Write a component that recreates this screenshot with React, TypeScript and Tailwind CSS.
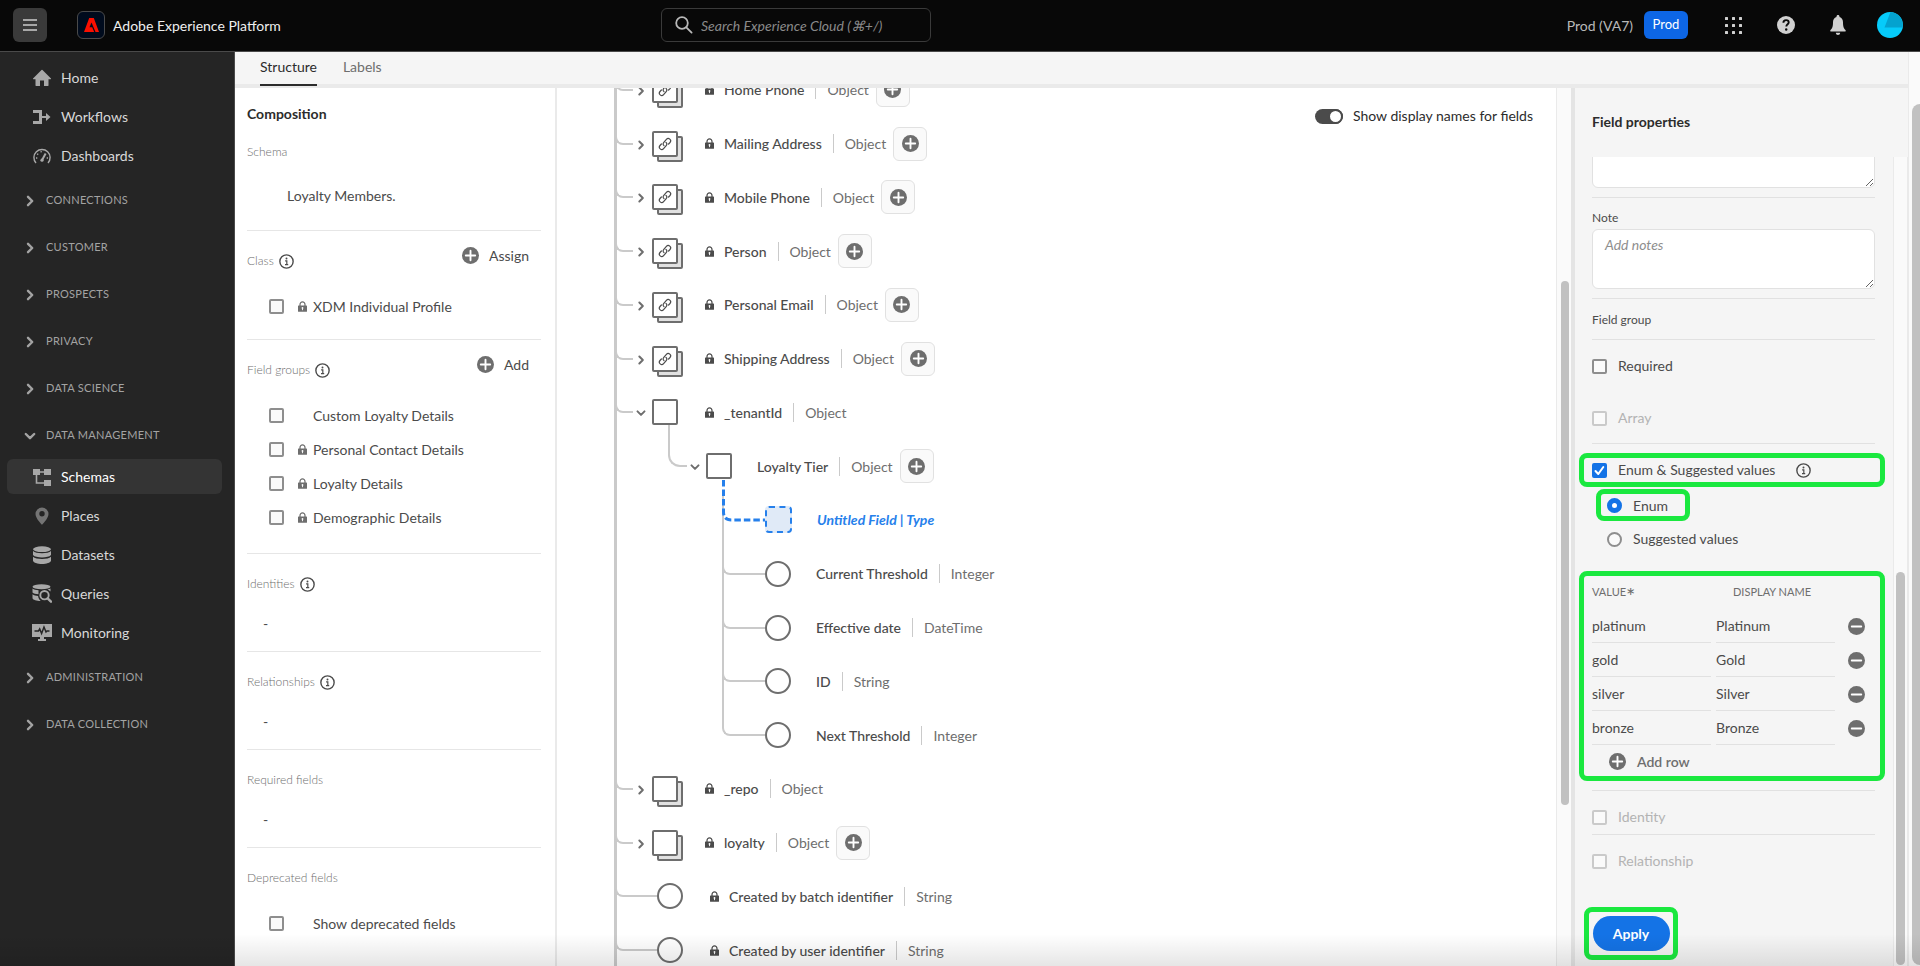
import { useState } from "react";
import type { ReactNode } from "react";
import clsx from "clsx";

type NodeKind = "stack" | "link" | "box" | "circle" | "draft";

interface TreeNode {
  label: string;
  type?: string;
  kind: NodeKind;
  depth: 0 | 1 | 2;
  locked?: boolean;
  open?: boolean;
  addable?: boolean;
  last?: boolean;
}

const treeNodes: TreeNode[] = [
  { label: "Home Phone", type: "Object", kind: "link", depth: 0, locked: true, addable: true },
  { label: "Mailing Address", type: "Object", kind: "link", depth: 0, locked: true, addable: true },
  { label: "Mobile Phone", type: "Object", kind: "link", depth: 0, locked: true, addable: true },
  { label: "Person", type: "Object", kind: "link", depth: 0, locked: true, addable: true },
  { label: "Personal Email", type: "Object", kind: "link", depth: 0, locked: true, addable: true },
  { label: "Shipping Address", type: "Object", kind: "link", depth: 0, locked: true, addable: true },
  { label: "_tenantId", type: "Object", kind: "box", depth: 0, locked: true, open: true },
  { label: "Loyalty Tier", type: "Object", kind: "box", depth: 1, open: true, addable: true },
  { label: "Untitled Field | Type", kind: "draft", depth: 2 },
  { label: "Current Threshold", type: "Integer", kind: "circle", depth: 2 },
  { label: "Effective date", type: "DateTime", kind: "circle", depth: 2 },
  { label: "ID", type: "String", kind: "circle", depth: 2 },
  { label: "Next Threshold", type: "Integer", kind: "circle", depth: 2, last: true },
  { label: "_repo", type: "Object", kind: "stack", depth: 0, locked: true },
  { label: "loyalty", type: "Object", kind: "stack", depth: 0, locked: true, addable: true },
  { label: "Created by batch identifier", type: "String", kind: "circle", depth: 0, locked: true },
  { label: "Created by user identifier", type: "String", kind: "circle", depth: 0, locked: true },
];

/* Icons */

const PlusCircle = () => (
  <svg viewBox="0 0 18 18" className="w-[17px] h-[17px] shrink-0" aria-hidden="true">
    <circle cx="9" cy="9" r="9" fill="#6e6e6e" />
    <path d="M9 4v10M4 9h10" stroke="#fff" strokeWidth="2" strokeLinecap="round" />
  </svg>
);

const MinusCircle = () => (
  <svg viewBox="0 0 18 18" className="w-[17px] h-[17px] shrink-0" aria-hidden="true">
    <circle cx="9" cy="9" r="9" fill="#6e6e6e" />
    <path d="M4 9h10" stroke="#fff" strokeWidth="2" strokeLinecap="round" />
  </svg>
);

const InfoIcon = () => (
  <svg viewBox="0 0 14 14" className="w-[15px] h-[15px] shrink-0" aria-hidden="true">
    <circle cx="7" cy="7" r="6.2" fill="none" stroke="#4b4b4b" strokeWidth="1.3" />
    <circle cx="7" cy="4.2" r="0.9" fill="#4b4b4b" />
    <path d="M5.7 6.4H7.3V9.8M5.6 9.9h3" fill="none" stroke="#4b4b4b" strokeWidth="1.1" />
  </svg>
);

const LockIcon = ({ className }: { className?: string }) => (
  <svg viewBox="0 0 9 11" className={clsx("w-[9px] h-[11px] shrink-0", className)} aria-hidden="true">
    <path d="M2 5V3.4a2.5 2.5 0 0 1 5 0V5" fill="none" stroke="currentColor" strokeWidth="1.2" />
    <rect x="0" y="4.4" width="9" height="6.4" rx="0.6" fill="currentColor" />
    <circle cx="4.5" cy="6.9" r="0.9" fill="#fff" />
    <path d="M4.5 7v2.2" stroke="#fff" strokeWidth="0.9" />
  </svg>
);

const Chevron = ({ open, className }: { open?: boolean; className?: string }) => (
  <svg
    viewBox="0 0 12 12"
    className={clsx("shrink-0", open && "rotate-90", className)}
    fill="none"
    stroke="currentColor"
    strokeWidth="2.4"
    strokeLinecap="round"
    strokeLinejoin="round"
    aria-hidden="true"
  >
    <path d="M4 1.8 8.2 6 4 10.2" />
  </svg>
);

const LinkIcon = () => (
  <svg
    viewBox="0 0 14 14"
    className="w-[14px] h-[14px]"
    fill="none"
    stroke="#4b4b4b"
    strokeWidth="1.2"
    strokeLinecap="round"
    aria-hidden="true"
  >
    <path d="M6 8.6a2.4 2.4 0 0 1-.2-3.3l2.6-3a2.4 2.4 0 0 1 3.6 3.2L10.6 7" />
    <path d="M8 5.4a2.4 2.4 0 0 1 .2 3.3l-2.6 3A2.4 2.4 0 0 1 2 8.5L3.4 7" />
  </svg>
);

const HomeIcon = () => (
  <svg viewBox="0 0 18 18" className="w-[18px] h-[18px]" fill="currentColor">
    <path d="M8.5.9 0 9.4c-.3.3-.1.8.3.8H2.5V16.5c0 .3.2.5.5.5H7v-5.5h4V17h4c.3 0 .5-.2.5-.5V10.2h2.2c.4 0 .6-.5.3-.8L9.5.9a.7.7 0 0 0-1 0z" />
  </svg>
);

const WorkflowIcon = () => (
  <svg viewBox="0 0 18 18" className="w-[18px] h-[18px]" fill="currentColor">
    <path d="M0 2h9v6h4V5l4.500 4L13 13v-3H9v6H0v-3h6V5H0z" />
  </svg>
);

const DashboardIcon = () => (
  <svg viewBox="0 0 18 18" className="w-[18px] h-[18px]" fill="none" stroke="currentColor" strokeWidth="1.4">
    <path d="M3 16A8.1 8.1 0 1 1 15 16" />
    <path d="M9 13.200 12.600 6.500" strokeWidth="2" />
    <circle cx="9" cy="13.2" r="1.6" fill="currentColor" stroke="none" />
    <path d="M3 11h1.300M4.200 6.800l1 .8M8 4.200l.3 1.200M13.700 11H15" />
  </svg>
);

const SchemaIcon = () => (
  <svg viewBox="0 0 18 18" className="w-[18px] h-[18px]" fill="currentColor">
    <rect x="0" y="1" width="7" height="6" />
    <rect x="11" y="1" width="7" height="6" />
    <rect x="11" y="12" width="7" height="6" />
    <path d="M7 4h4M3.500 6v9H11" fill="none" stroke="currentColor" strokeWidth="1.6" />
  </svg>
);

const PlacesIcon = () => (
  <svg viewBox="0 0 18 18" className="w-[18px] h-[18px]" fill="#747474">
    <path
      fillRule="evenodd"
      d="M9 .5A6.5 6.5 0 0 0 2.5 7C2.5 11.5 9 17.8 9 17.8S15.500 11.5 15.500 7A6.500 6.500 0 0 0 9 .5zM9 9.400a2.700 2.700 0 1 1 0-5.400 2.700 2.700 0 0 1 0 5.400z"
    />
  </svg>
);

const DatasetIcon = () => (
  <svg viewBox="0 0 18 18" className="w-[18px] h-[18px]" fill="currentColor">
    <ellipse cx="9" cy="3.2" rx="9" ry="2.9" />
    <path d="M0 5c1.500 1.600 5 2.200 9 2.200S16.500 6.600 18 5v4c-1.500 1.800-5 2.400-9 2.400S1.500 10.800 0 9z" />
    <path d="M0 10.800c1.500 1.600 5 2.200 9 2.200s7.500-.6 9-2.200v4C17.500 16.800 13.500 18 9 18S.5 16.800 0 14.800z" />
  </svg>
);

const QueryIcon = () => (
  <svg viewBox="0 0 20 19" className="w-[20px] h-[19px] -ml-px" fill="currentColor">
    <ellipse cx="9.5" cy="2.7" rx="9" ry="2.5" />
    <path d="M.5 4.600c1.300 1 3.500 1.500 6 1.700v4C3.800 10 1.500 9.500.5 8.500zM.5 10.300c1.300 1 3.500 1.500 5.600 1.700.2 2 1.200 3.800 2.600 5C4.500 17 1 16 .5 14.300zM18.500 4.600v2.800c-1-1-2-1.500-3-1.800 1.200-.3 2.300-.5 3-1z" />
    <circle cx="12.5" cy="11.2" r="4.2" fill="none" stroke="currentColor" strokeWidth="1.9" />
    <path d="M15.600 14.300 19 17.700" stroke="currentColor" strokeWidth="2.4" strokeLinecap="round" />
  </svg>
);

const MonitorIcon = () => (
  <svg viewBox="0 0 20 17" className="w-[20px] h-[17px] -ml-px" fill="currentColor">
    <path d="M0 0h20v13h-8v2h2v2H6v-2h2v-2H0z" />
    <path d="M2.500 7h4l1.200-2L9.600 9.500 12 3l2 5 1-1h2.500" fill="none" stroke="#252525" strokeWidth="1.5" />
  </svg>
);

/* Sidebar */

const NavItem = ({ icon, label, active }: { icon: ReactNode; label: string; active?: boolean }) => (
  <a
    href="#"
    className={clsx(
      "flex items-center h-[35px] mb-1 ml-[7px] mr-3 pl-[26px] rounded-md text-[14px]",
      active ? "bg-[#343434] text-white" : "text-[#d8d8d8]"
    )}
  >
    <span className="w-[28px] flex items-center text-[#a8a8a8]">{icon}</span>
    {label}
  </a>
);

const NavSection = ({ label, open }: { label: string; open?: boolean }) => (
  <button
    type="button"
    aria-expanded={!!open}
    className="flex items-center w-full h-[47px] pl-6 text-[11px] tracking-wide text-[#a3a3a3]"
  >
    <Chevron open={open} className="w-[12px] h-[12px] mr-[10px]" />
    {label}
  </button>
);

const Sidebar = () => (
  <nav className="w-[235px] shrink-0 bg-[#252525] border-r border-[#4a4a4a] pt-2">
    <NavItem icon={<HomeIcon />} label="Home" />
    <NavItem icon={<WorkflowIcon />} label="Workflows" />
    <NavItem icon={<DashboardIcon />} label="Dashboards" />
    <NavSection label="CONNECTIONS" />
    <NavSection label="CUSTOMER" />
    <NavSection label="PROSPECTS" />
    <NavSection label="PRIVACY" />
    <NavSection label="DATA SCIENCE" />
    <NavSection label="DATA MANAGEMENT" open />
    <NavItem icon={<SchemaIcon />} label="Schemas" active />
    <NavItem icon={<PlacesIcon />} label="Places" />
    <NavItem icon={<DatasetIcon />} label="Datasets" />
    <NavItem icon={<QueryIcon />} label="Queries" />
    <NavItem icon={<MonitorIcon />} label="Monitoring" />
    <NavSection label="ADMINISTRATION" />
    <NavSection label="DATA COLLECTION" />
  </nav>
);

/* Header */

const Header = () => (
  <header className="flex items-center h-[52px] shrink-0 pb-px bg-[#080808] border-b border-[#4a4a4a] text-[#d8d8d8]">
    <div className="flex items-center w-[661px] shrink-0 pl-[13px]">
      <button type="button" aria-label="Menu" className="w-[34px] h-[34px] rounded-md bg-[#3a3a3a] flex items-center justify-center">
        <svg viewBox="0 0 14 12" className="w-[14px] h-[12px]" stroke="#a8a8a8" strokeWidth="2">
          <path d="M0 1h14M0 6h14M0 11h14" />
        </svg>
      </button>
      <span className="ml-[30px] w-[28px] h-[28px] rounded-md border border-[#4a4a4a] bg-[#000b1d] flex items-center justify-center">
        <svg viewBox="0 0 15 14" className="w-[15px] h-[14px]" fill="#fa0f00">
          <path d="M5.200 0h4.600L15 14h-3.500L7.500 4.400 5.500 9.300H8.200L10.200 14H0z" />
        </svg>
      </span>
      <span className="ml-2 text-[14px] text-[#efefef]">Adobe Experience Platform</span>
    </div>
    <label className="flex items-center w-[270px] h-[34px] pl-[13px] rounded-md border border-[#3a3a3a]">
      <svg viewBox="0 0 18 18" className="w-[18px] h-[18px] shrink-0" fill="none" stroke="#b8b8b8" strokeWidth="1.8" strokeLinecap="round">
        <circle cx="7" cy="7" r="5.8" />
        <path d="M11.300 11.300 16.600 16.600" />
      </svg>
      <input
        type="text"
        aria-label="Search Experience Cloud"
        placeholder="Search Experience Cloud (⌘+/)"
        className="ml-[8px] w-full bg-transparent outline-none text-[14px] italic placeholder:text-[#8a8a8a]"
      />
    </label>
    <div className="ml-auto flex items-center pr-[17px]">
      <span className="text-[14px] text-[#b8b8b8]">Prod (VA7)</span>
      <button type="button" className="ml-[11px] h-[28px] w-[44px] rounded-md bg-[#0d66e5] text-[13px] text-white">
        Prod
      </button>
      <button type="button" aria-label="Apps" className="ml-[37px]">
        <svg viewBox="0 0 17 17" className="w-[17px] h-[17px]" fill="#d0d0d0">
          {[0, 7, 14].map(y => [0, 7, 14].map(x => <rect key={`${x}-${y}`} x={x} y={y} width="3" height="3" rx="0.5" />))}
        </svg>
      </button>
      <button type="button" aria-label="Help" className="ml-[35px]">
        <svg viewBox="0 0 18 18" className="w-[18px] h-[18px]">
          <circle cx="9" cy="9" r="9" fill="#d0d0d0" />
          <path d="M6.400 6.800C6.400 5 7.600 4.100 9.100 4.100s2.600.9 2.600 2.300c0 1.800-2.400 2-2.400 4.200" fill="none" stroke="#080808" strokeWidth="1.9" />
          <circle cx="9.2" cy="13.5" r="1.2" fill="#080808" />
        </svg>
      </button>
      <button type="button" aria-label="Notifications" className="ml-[35px]">
        <svg viewBox="0 0 16 20" className="w-[16px] h-[20px]" fill="#d0d0d0">
          <path d="M8 0c.9 0 1.500.6 1.500 1.500v.6C11.800 2.800 13 4.800 13 7.200c0 4.800 1 6.300 2.600 8 .4.500.1 1.300-.6 1.300H1c-.7 0-1-.8-.6-1.300C2 13.500 3 12 3 7.200c0-2.400 1.200-4.400 3.500-5.100v-.6C6.500.6 7.100 0 8 0zM5.800 17.800h4.400C10 19.200 9.200 20 8 20s-2-.8-2.200-2.200z" />
        </svg>
      </button>
      <button type="button" aria-label="Account" className="ml-[31px]">
        <svg viewBox="0 0 26 26" className="w-[26px] h-[26px]">
          <circle cx="13" cy="13" r="13" fill="#06cbfa" />
          <path d="M13.500 0A13 13 0 0 1 25.500 15.500L7.500 15.500z" fill="#04a2cf" />
        </svg>
      </button>
    </div>
  </header>
);

/* Composition panel */

const checkboxClass = "appearance-none block w-[15px] h-[15px] shrink-0 rounded-xs border-2 bg-[#fafafa]";

interface CompositionSectionProps {
  title: string;
  info?: boolean;
  action?: string;
  last?: boolean;
  children: ReactNode;
}

const CompositionSection = ({ title, info, action, last, children }: CompositionSectionProps) => (
  <section className={clsx("pt-[20px] pb-4", !last && "border-b border-[#e6e6e6]")}>
    <div className="flex items-center h-[20px] mb-[18px]">
      <h3 className="text-[12px] font-light text-[#6e6e6e]">{title}</h3>
      {info && <span className="ml-[5px]"><InfoIcon /></span>}
      {action && (
        <button type="button" className="ml-auto mr-3 -mt-3 flex items-center gap-[10px] text-[14px] text-[#4b4b4b]">
          <PlusCircle /> {action}
        </button>
      )}
    </div>
    {children}
  </section>
);

const CompositionItem = ({ label, locked }: { label: string; locked?: boolean }) => (
  <label className="flex items-center h-[34px] pl-[22px] text-[14px] text-[#4b4b4b]">
    <input type="checkbox" className={clsx(checkboxClass, "border-[#8e8e8e]")} />
    <span className="w-[29px] pl-[14px]">{locked && <LockIcon className="text-[#6e6e6e]" />}</span>
    {label}
  </label>
);

const EmptyValue = () => <p className="h-[23px] pl-4 text-[14px] leading-[23px] text-[#4b4b4b]">-</p>;

const CompositionPanel = () => (
  <aside className="w-[322px] shrink-0 bg-white border-r-2 border-[#eaeaea] pl-3 pr-[14px]">
    <h2 className="pt-4 text-[14px] leading-[20px] font-bold text-[#2c2c2c]">Composition</h2>
    <section className="border-b border-[#e6e6e6] pt-[18px] pb-[24px]">
      <h3 className="text-[12px] leading-[20px] font-light text-[#6e6e6e]">Schema</h3>
      <p className="mt-6 pl-10 text-[14px] leading-[20px] text-[#4b4b4b]">Loyalty Members.</p>
    </section>
    <CompositionSection title="Class" info action="Assign">
      <CompositionItem label="XDM Individual Profile" locked />
    </CompositionSection>
    <CompositionSection title="Field groups" info action="Add">
      <div className="pb-[3px]">
        <CompositionItem label="Custom Loyalty Details" />
        <CompositionItem label="Personal Contact Details" locked />
        <CompositionItem label="Loyalty Details" locked />
        <CompositionItem label="Demographic Details" locked />
      </div>
    </CompositionSection>
    <CompositionSection title="Identities" info><EmptyValue /></CompositionSection>
    <CompositionSection title="Relationships" info><EmptyValue /></CompositionSection>
    <CompositionSection title="Required fields"><EmptyValue /></CompositionSection>
    <CompositionSection title="Deprecated fields" last>
      <CompositionItem label="Show deprecated fields" />
    </CompositionSection>
  </aside>
);

/* Schema tree */

const NodeShape = ({ kind }: { kind: NodeKind }) => {
  if (kind === "circle") return <span className="w-[26px] h-[26px] shrink-0 rounded-full border-2 border-[#6e6e6e] bg-white" />;
  if (kind === "draft") return <span className="w-[27px] h-[27px] shrink-0 rounded-sm border-2 border-dashed border-[#2680eb] bg-[#e0eaf7]" />;
  return (
    <span className="relative w-[26px] h-[26px] shrink-0">
      {kind !== "box" && <span className="absolute top-[5px] left-[5px] w-full h-full rounded-xs border-2 border-[#6e6e6e] bg-[#e1e1e1]" />}
      <span className="absolute inset-0 rounded-xs border-2 border-[#6e6e6e] bg-white flex items-center justify-center">
        {kind === "link" && <LinkIcon />}
      </span>
    </span>
  );
};

const Connector = ({ node }: { node: TreeNode }) => {
  const leaf = node.kind === "circle" || node.kind === "draft";
  if (node.kind === "draft") {
    return (
      <span className="w-[43px] shrink-0 self-stretch border-l-2 border-[#cacaca]">
        <svg viewBox="0 0 41 28" className="w-[41px] h-[28px] overflow-visible" fill="none" stroke="#2680eb" strokeWidth="3" strokeDasharray="6.500 3">
          <path d="M-.5-13V19q0 8 8 8H41" />
        </svg>
      </span>
    );
  }
  return (
    <span
      className={clsx(
        "shrink-0 self-stretch flex flex-col",
        leaf ? "w-[43px]" : "w-[19px]",
        node.depth === 0 && "-ml-[3px] justify-center",
        node.depth === 2 && !node.last && "border-l-2 border-[#cacaca]"
      )}
    >
      <span
        className={clsx(
          "border-b-2 border-[#cacaca]",
          node.depth === 0 && "h-[12px] -mt-[10px] ml-px border-l-2 rounded-bl-lg",
          node.depth === 1 && "h-[42px] -mt-[14px] border-l-2 rounded-bl-xl",
          node.depth === 2 && "h-[28px] border-l-2 rounded-bl-lg",
          node.depth === 2 && !node.last && "-ml-[2px]"
        )}
      />
    </span>
  );
};

const TreeRow = ({ node }: { node: TreeNode }) => {
  const leaf = node.kind === "circle" || node.kind === "draft";
  return (
    <li className={clsx("flex items-center text-[14px]", node.depth === 1 && "pl-[51px]", node.depth === 2 && "pl-[105px]")}>
      <Connector node={node} />
      {!leaf && (
        <button type="button" aria-label={`Toggle ${node.label}`} className="w-[19px] pr-[4px] pt-[2px] flex justify-center text-[#6e6e6e]">
          <Chevron open={node.open} className="w-[10px] h-[10px]" />
        </button>
      )}
      <NodeShape kind={node.kind} />
      {node.locked && <LockIcon className="ml-[27px] text-[#4b4b4b]" />}
      <span
        className={clsx(
          "whitespace-nowrap",
          node.locked ? "ml-[10px]" : "ml-[25px]",
          node.kind === "draft" ? "font-bold italic text-[#2680eb]" : "font-medium text-[#4b4b4b]"
        )}
      >
        {node.label}
      </span>
      {node.type && <span className="ml-[11px] pl-[11px] leading-[19px] border-l border-[#cacaca] text-[#6e6e6e]">{node.type}</span>}
      {node.addable && (
        <button
          type="button"
          aria-label={`Add field to ${node.label}`}
          className="ml-[7px] w-[34px] h-[34px] shrink-0 rounded-md border border-[#e1e1e1] bg-[#fafafa] flex items-center justify-center"
        >
          <PlusCircle />
        </button>
      )}
    </li>
  );
};

const SchemaCanvas = () => {
  const [showNames, setShowNames] = useState(true);
  return (
    <main className="relative flex-1 min-w-0 flex bg-white overflow-hidden">
      <ul className="flex-1 ml-[57px] -mt-[25px] h-[914px] grid auto-rows-fr border-l-3 border-[#cacaca]">
        {treeNodes.map(node => <TreeRow key={node.label} node={node} />)}
      </ul>
      <label className="absolute top-[18px] right-[38px] flex items-center gap-[10px] text-[14px] leading-[20px] text-[#2c2c2c]">
        <input
          type="checkbox"
          role="switch"
          checked={showNames}
          onChange={e => setShowNames(e.target.checked)}
          className="appearance-none relative w-[28px] h-[15px] rounded-full bg-[#4b4b4b] after:content-[''] after:absolute after:right-0 after:top-0 after:w-[15px] after:h-[15px] after:rounded-full after:border-2 after:border-[#4b4b4b] after:bg-white"
        />
        Show display names for fields
      </label>
      <div className="w-[15px] shrink-0 pt-[193px] bg-[#fafafa] border-l border-[#eaeaea]">
        <div className="ml-[4px] w-[8px] h-[524px] rounded-full bg-[#c1c1c1]" />
      </div>
    </main>
  );
};

/* Field properties */

interface FieldCheckboxProps {
  label: string;
  disabled?: boolean;
  checked?: boolean;
  onChange?: (checked: boolean) => void;
}

const FieldCheckbox = ({ label, disabled, checked, onChange }: FieldCheckboxProps) => (
  <label className={clsx("flex items-center gap-[11px] text-[14px] leading-[20px]", disabled ? "text-[#b3b3b3]" : "text-[#4b4b4b]")}>
    <span className="relative">
      <input
        type="checkbox"
        disabled={disabled}
        checked={checked}
        onChange={e => onChange?.(e.target.checked)}
        className={clsx(checkboxClass, disabled ? "border-[#cacaca]" : "border-[#8e8e8e]", "checked:bg-[#1473e6] checked:border-[#1473e6]")}
      />
      {checked && (
        <svg viewBox="0 0 15 15" className="absolute inset-0 pointer-events-none" fill="none" stroke="#fff" strokeWidth="2" strokeLinecap="round" strokeLinejoin="round">
          <path d="M3.500 8 6.300 11 11.300 4" />
        </svg>
      )}
    </span>
    {label}
  </label>
);

const radioClass =
  "appearance-none w-[15px] h-[15px] shrink-0 rounded-full border-2 border-[#8e8e8e] bg-[#fafafa] checked:border-[5px] checked:border-[#1473e6] checked:bg-white";

const FieldProperties = () => {
  const [enumOn, setEnumOn] = useState(true);
  const [mode, setMode] = useState<"enum" | "suggested">("enum");
  const [rows, setRows] = useState([
    { value: "platinum", name: "Platinum" },
    { value: "gold", name: "Gold" },
    { value: "silver", name: "Silver" },
    { value: "bronze", name: "Bronze" },
  ]);

  const updateRow = (index: number, patch: Partial<{ value: string; name: string }>) => {
    setRows(rows.map((row, i) => (i === index ? { ...row, ...patch } : row)));
  };

  return (
    <aside className="w-[337px] shrink-0 bg-[#f5f5f5] border-l-4 border-[#e4e4e4] flex flex-col">
      <h2 className="px-[17px] pt-6 pb-[25px] text-[14px] leading-[20px] font-bold text-[#2c2c2c]">Field properties</h2>
      <div className="flex-1 min-h-0 flex overflow-hidden">
        <div className="flex-1 pl-[17px] pr-[18px] text-[14px] text-[#4b4b4b]">
          <div className="pb-[9px] border-b border-[#e1e1e1]">
            <textarea aria-label="Description" className="block w-full h-[60px] -mt-[29px] rounded-md border border-[#e1e1e1] bg-white" />
          </div>
          <div className="pt-[11px] pb-[9px] border-b border-[#e1e1e1]">
            <label htmlFor="note" className="block text-[12px] leading-[18px]">Note</label>
            <textarea
              id="note"
              placeholder="Add notes"
              className="block mt-[2px] w-full h-[60px] px-3 py-[5px] rounded-md border border-[#e1e1e1] bg-white text-[14px] leading-[20px] placeholder:italic placeholder:text-[#8e8e8e]"
            />
          </div>
          <p className="pt-[12px] pb-[10px] border-b border-[#e1e1e1] text-[12px] leading-[18px]">Field group</p>
          <div className="pt-[16px] pb-[15px] border-b border-[#e1e1e1] flex flex-col gap-8">
            <FieldCheckbox label="Required" />
            <FieldCheckbox label="Array" disabled />
          </div>

          <div className="mt-[9px] -ml-[13px] -mr-[10px] h-[34px] flex items-center border-[5px] border-[#1ae83f] rounded-lg pl-2">
            <FieldCheckbox label="Enum & Suggested values" checked={enumOn} onChange={setEnumOn} />
            <span className="ml-[21px]"><InfoIcon /></span>
          </div>
          <div className="mt-[2px] ml-1 w-[94px] h-[32px] flex items-center border-[5px] border-[#1ae83f] rounded-lg pl-[6px]">
            <label className="flex items-center gap-[11px]">
              <input type="radio" name="mode" checked={mode === "enum"} onChange={() => setMode("enum")} className={radioClass} />
              Enum
            </label>
          </div>
          <label className="mt-[8px] ml-[15px] flex items-center gap-[11px] leading-[20px]">
            <input type="radio" name="mode" checked={mode === "suggested"} onChange={() => setMode("suggested")} className={radioClass} />
            Suggested values
          </label>

          <div className="mt-[22px] -ml-[13px] -mr-[10px] border-[5px] border-[#1ae83f] rounded-lg pl-2">
            <table className="table-fixed w-full">
              <thead>
                <tr className="h-[33px] text-[11px] text-[#6e6e6e] text-left">
                  <th className="w-[124px] font-normal">
                    <span className="flex items-center h-[20px]">
                      VALUE<span className="pt-[6px] text-[22px] leading-[20px]">*</span>
                    </span>
                  </th>
                  <th className="w-[119px] pl-[17px] font-normal">DISPLAY NAME</th>
                  <th aria-label="Remove" />
                </tr>
              </thead>
              <tbody>
                {rows.map((row, i) => (
                  <tr key={i} className="h-[34px]">
                    <td className="pr-[5px]">
                      <input
                        type="text"
                        aria-label="Value"
                        value={row.value}
                        onChange={e => updateRow(i, { value: e.target.value })}
                        className="block w-full h-[34px] bg-transparent border-b border-[#e1e1e1] outline-none"
                      />
                    </td>
                    <td>
                      <input
                        type="text"
                        aria-label="Display name"
                        value={row.name}
                        onChange={e => updateRow(i, { name: e.target.value })}
                        className="block w-full h-[34px] bg-transparent border-b border-[#e1e1e1] outline-none"
                      />
                    </td>
                    <td className="pl-[13px]">
                      <button
                        type="button"
                        aria-label={`Remove ${row.value}`}
                        onClick={() => setRows(rows.filter((_, r) => r !== i))}
                        className="block"
                      >
                        <MinusCircle />
                      </button>
                    </td>
                  </tr>
                ))}
              </tbody>
            </table>
            <button
              type="button"
              onClick={() => setRows([...rows, { value: "", name: "" }])}
              className="ml-[17px] h-[31px] pt-px flex items-center gap-[11px] font-semibold text-[#6e6e6e]"
            >
              <PlusCircle /> Add row
            </button>
          </div>

          <div className="mt-[9px] pt-[16px] pb-[7px] border-y border-[#e1e1e1]">
            <FieldCheckbox label="Identity" disabled />
          </div>
          <div className="pt-[16px]">
            <FieldCheckbox label="Relationship" disabled />
          </div>
          <div className="mt-[36px] -ml-2 w-[94px] h-[53px] flex items-center justify-center border-[5px] border-[#1ae83f] rounded-lg">
            <button type="button" className="w-[77px] h-[35px] rounded-full bg-[#1473e6] font-bold text-white">Apply</button>
          </div>
        </div>
        <div className="w-[15px] shrink-0 pt-[415px] bg-[#fafafa] border-x border-[#eaeaea]">
          <div className="mx-auto w-[9px] h-[393px] rounded-full bg-[#c1c1c1]" />
        </div>
      </div>
    </aside>
  );
};

export default function App() {
  return (
    <div className="relative h-screen flex flex-col overflow-hidden bg-[#f5f5f5] font-[Lato,'Open_Sans',sans-serif]">
      <Header />
      <div className="flex-1 min-h-0 flex">
        <Sidebar />
        <div className="flex-1 min-w-0 flex flex-col">
          <div role="tablist" className="flex h-[36px] shrink-0 pl-[25px] gap-[26px] border-b-4 border-[#eaeaea] bg-[#f5f5f5] text-[14px]">
            <button type="button" role="tab" aria-selected className="h-[34px] pb-[3px] border-b-2 border-[#2c2c2c] text-[#2c2c2c]">Structure</button>
            <button type="button" role="tab" className="h-[34px] pb-[3px] border-b-2 border-transparent text-[#6e6e6e]">Labels</button>
          </div>
          <div className="flex-1 min-h-0 flex">
            <CompositionPanel />
            <SchemaCanvas />
            <FieldProperties />
          </div>
        </div>
        <div className="w-[12px] shrink-0 pt-[52px] bg-[#fafafa] border-l border-[#eaeaea]">
          <div className="ml-[3px] w-[8px] h-[861px] rounded-l-full bg-[#c1c1c1]" />
        </div>
      </div>
      <div className="absolute inset-x-0 bottom-0 h-8 bg-linear-to-t from-black/10 to-transparent pointer-events-none" />
    </div>
  );
}
